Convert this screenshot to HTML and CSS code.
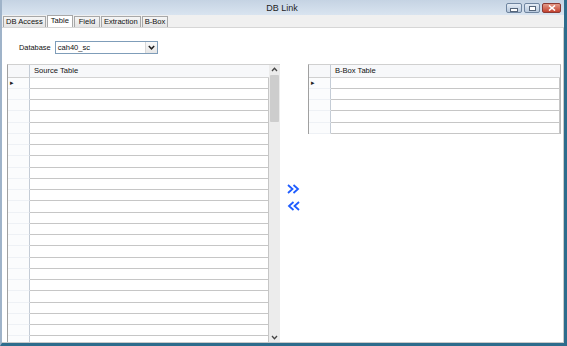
FILE: index.html
```html
<!DOCTYPE html>
<html lang="en">
<head>
  <meta charset="UTF-8"/>
  <title>DB Link</title>
  <link rel="stylesheet" href="styles.css">
</head>
<body>

<div class="window">

  <!-- Title bar -->
  <div class="titlebar">
    <span></span>
    <span class="title">DB Link</span>
    <div class="caption-btns">
      <span class="cap-btn" title="Minimize"><i class="cap-min"></i></span>
      <span class="cap-btn" title="Maximize"><i class="cap-max"></i></span>
      <span class="cap-btn close" title="Close">
        <svg width="8" height="6" viewBox="0 0 8 6"><path d="M1 0.5 L7 5.5 M7 0.5 L1 5.5" stroke="#fff" stroke-width="1.6"/></svg>
      </span>
    </div>
  </div>

  <!-- Tabs -->
  <div class="tabs">
    <span class="tab">DB Access</span>
    <span class="tab active">Table</span>
    <span class="tab">Field</span>
    <span class="tab">Extraction</span>
    <span class="tab">B-Box</span>
  </div>

  <!-- Tab page -->
  <div class="page">
    <div class="db-row">
      <span class="db-label">Database</span>
      <div class="combo">
        <span class="combo-text">cah40_sc</span>
        <span class="combo-btn">
          <svg width="7" height="5" viewBox="0 0 7 5"><path d="M0.8 1 L3.5 3.8 L6.2 1" fill="none" stroke="#222" stroke-width="1.5"/></svg>
        </span>
      </div>
    </div>

    <div class="grids">

      <!-- Source table grid -->
      <div class="grid source">
        <div class="grid-body">
          <div class="grid-row head"><span class="ind"></span><span class="cell">Source Table</span></div>
          <div class="grid-row"><span class="ind cur">&#9656;</span><span class="cell"></span></div>
          <div class="grid-row"><span class="ind"></span><span class="cell"></span></div>
          <div class="grid-row"><span class="ind"></span><span class="cell"></span></div>
          <div class="grid-row"><span class="ind"></span><span class="cell"></span></div>
          <div class="grid-row"><span class="ind"></span><span class="cell"></span></div>
          <div class="grid-row"><span class="ind"></span><span class="cell"></span></div>
          <div class="grid-row"><span class="ind"></span><span class="cell"></span></div>
          <div class="grid-row"><span class="ind"></span><span class="cell"></span></div>
          <div class="grid-row"><span class="ind"></span><span class="cell"></span></div>
          <div class="grid-row"><span class="ind"></span><span class="cell"></span></div>
          <div class="grid-row"><span class="ind"></span><span class="cell"></span></div>
          <div class="grid-row"><span class="ind"></span><span class="cell"></span></div>
          <div class="grid-row"><span class="ind"></span><span class="cell"></span></div>
          <div class="grid-row"><span class="ind"></span><span class="cell"></span></div>
          <div class="grid-row"><span class="ind"></span><span class="cell"></span></div>
          <div class="grid-row"><span class="ind"></span><span class="cell"></span></div>
          <div class="grid-row"><span class="ind"></span><span class="cell"></span></div>
          <div class="grid-row"><span class="ind"></span><span class="cell"></span></div>
          <div class="grid-row"><span class="ind"></span><span class="cell"></span></div>
          <div class="grid-row"><span class="ind"></span><span class="cell"></span></div>
          <div class="grid-row"><span class="ind"></span><span class="cell"></span></div>
          <div class="grid-row"><span class="ind"></span><span class="cell"></span></div>
          <div class="grid-row"><span class="ind"></span><span class="cell"></span></div>
          <div class="grid-row"><span class="ind"></span><span class="cell"></span></div>
        </div>
        <div class="vscroll">
          <svg class="sc-arrow" width="7" height="5" viewBox="0 0 7 5"><path d="M1 4 L3.5 1.3 L6 4" fill="none" stroke="#444" stroke-width="1.3"/></svg>
          <div class="sc-thumb"></div>
          <div class="sc-track"></div>
          <svg class="sc-arrow" width="7" height="5" viewBox="0 0 7 5"><path d="M1 1 L3.5 3.7 L6 1" fill="none" stroke="#444" stroke-width="1.3"/></svg>
        </div>
      </div>

      <!-- Move buttons -->
      <div class="mover">
        <svg width="13" height="10" viewBox="0 0 13 10"><path d="M1 1 L5.5 5 L1 9 M6.5 1 L11 5 L6.5 9" fill="none" stroke="#1e5cff" stroke-width="1.8"/></svg>
        <svg width="13" height="10" viewBox="0 0 13 10"><path d="M6.5 1 L2 5 L6.5 9 M12 1 L7.5 5 L12 9" fill="none" stroke="#1e5cff" stroke-width="1.8"/></svg>
      </div>

      <!-- B-Box table grid -->
      <div class="grid bbox">
        <div class="grid-body">
          <div class="grid-row head"><span class="ind"></span><span class="cell">B-Box Table</span></div>
          <div class="grid-row"><span class="ind cur">&#9656;</span><span class="cell"></span></div>
          <div class="grid-row"><span class="ind"></span><span class="cell"></span></div>
          <div class="grid-row"><span class="ind"></span><span class="cell"></span></div>
          <div class="grid-row"><span class="ind"></span><span class="cell"></span></div>
          <div class="grid-row"><span class="ind"></span><span class="cell"></span></div>
        </div>
      </div>

    </div>
  </div>

</div>

</body>
</html>
```

FILE: styles.css
```css
html, body {
  margin: 0; padding: 0; background: #fff;
  font-family: "Liberation Sans", Arial, sans-serif;
  font-size: 8px;
  color: #111;
}
.window {
  width: 567px;
  height: 346px;
  box-sizing: border-box;
  display: flex;
  flex-direction: column;
  border-left: 2px solid #9fb3c9;
  border-right: 3px solid #2d6c8c;
  border-bottom: 3px solid #2d6c8c;
  background: #f0f0f0;
  overflow: hidden;
}

/* title bar */
.titlebar {
  height: 15px;
  flex: none;
  display: grid;
  grid-template-columns: 1fr auto 1fr;
  align-items: center;
  background: linear-gradient(#c5d3e3, #d9e4f0);
  margin-left: -2px;
}
.title {
  font-size: 9px;
  color: #1e1e1e;
  padding-top: 1px;
}
.caption-btns {
  justify-self: end;
  display: flex;
  gap: 2px;
  padding-right: 3px;
  padding-top: 1px;
}
.cap-btn {
  width: 16px;
  height: 10px;
  box-sizing: border-box;
  border: 1px solid #6f85a0;
  border-radius: 2px;
  background: linear-gradient(#e4ecf5, #b7c8dc);
  display: flex;
  align-items: center;
  justify-content: center;
}
.cap-btn.close {
  width: 19px;
  border-color: #8b3a34;
  background: linear-gradient(#e49a88, #c3412f);
}
.cap-min {
  width: 6px;
  height: 2px;
  margin-top: 3px;
  background: #fff;
  border: 1px solid #55657a;
}
.cap-max {
  width: 5px;
  height: 3px;
  background: #fff;
  border: 1px solid #55657a;
}

/* tabs */
.tabs {
  height: 12px;
  flex: none;
  display: flex;
  align-items: flex-end;
  padding-left: 1px;
  background: #f0f0f0;
}
.tab {
  height: 11px;
  min-width: 26px;
  box-sizing: border-box;
  padding: 0 2px;
  border: 1px solid #a8a8a8;
  border-bottom: none;
  background: linear-gradient(#f5f5f5, #e4e4e4);
  font-size: 7.6px;
  line-height: 10px;
  text-align: center;
  margin-right: 1px;
  color: #111;
}
.tab.active {
  height: 12px;
  background: #fff;
  padding: 0 3px;
}

/* page */
.page {
  flex: 1;
  display: flex;
  flex-direction: column;
  background: #fff;
  border-top: 1px solid #d6d6d6;
  border-right: 1px solid #c9c9c9;
  border-bottom: 1px solid #c9c9c9;
  padding: 0 2px 0 5px;
  min-height: 0;
}
.db-row {
  display: flex;
  align-items: center;
  gap: 4px;
  margin-top: 13px;
  padding-left: 12px;
}
.db-label {
  font-size: 7.4px;
}
.combo {
  width: 103px;
  height: 13px;
  box-sizing: border-box;
  border: 1px solid #7f9db9;
  display: flex;
  align-items: center;
}
.combo-text {
  flex: 1;
  padding-left: 2px;
  font-size: 7.6px;
}
.combo-btn {
  width: 11px;
  height: 11px;
  display: flex;
  align-items: center;
  justify-content: center;
  background: linear-gradient(#fafafa, #e6e6e6);
  border-left: 1px solid #d8d8d8;
}

/* grids */
.grids {
  flex: 1;
  display: flex;
  align-items: flex-start;
  margin-top: 10px;
  min-height: 0;
}
.grid {
  display: flex;
  border-left: 1px solid #a0a0a0;
  border-top: 1px solid #d0d0d0;
  overflow: hidden;
}
.grid.source {
  width: 274px;
  height: 100%;
  box-sizing: border-box;
}
.grid.bbox {
  width: 252px;
  border-right: 1px solid #b8b8b8;
}
.grid-body {
  flex: 1;
  min-width: 0;
}
.grid-row {
  display: flex;
  height: 11.25px;
  box-sizing: border-box;
}
.grid-row.head {
  height: 12.5px;
  background: #f7f8fa;
}
.ind {
  width: 22px;
  flex: none;
  box-sizing: border-box;
  border-right: 1px solid #c4ccd6;
  border-bottom: 1px solid #eef1f5;
  background: #fbfcfd;
  font-size: 7px;
  line-height: 10px;
  padding-left: 2px;
  color: #222;
}
.head .ind {
  border-bottom: 1px solid #d0d0d0;
  background: #f7f8fa;
}
.cell {
  flex: 1;
  border-bottom: 1px solid #c6c6c6;
  border-right: 1px solid #c6c6c6;
  padding-left: 4px;
  line-height: 11px;
  font-size: 7.6px;
}
.head .cell {
  border-bottom-color: #d4d4d4;
  border-right: none;
}

/* scrollbar */
.vscroll {
  width: 11px;
  flex: none;
  display: flex;
  flex-direction: column;
  align-items: center;
  background: #ececec;
}
.sc-arrow {
  flex: none;
  margin: 2px 0;
}
.sc-thumb {
  width: 9px;
  height: 47px;
  flex: none;
  margin-top: 1px;
  background: #cdcdcd;
  border-radius: 1px;
}
.sc-track {
  flex: 1;
}

/* move buttons */
.mover {
  width: 28px;
  flex: none;
  align-self: stretch;
  display: flex;
  flex-direction: column;
  align-items: center;
  gap: 7px;
  padding-top: 120px;
  box-sizing: border-box;
}
```
